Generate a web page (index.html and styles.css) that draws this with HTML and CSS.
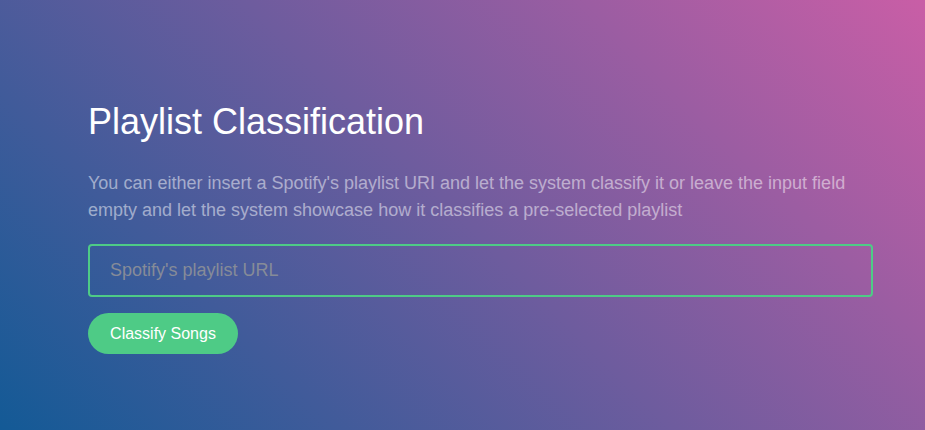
FILE: index.html
```html
<!DOCTYPE html>
<html lang="en">
<head>
<meta charset="utf-8">
<title>Playlist Classification</title>
<link rel="stylesheet" href="styles.css">
</head>
<body>
<main class="page">
  <section class="panel">
    <h1 class="title">Playlist Classification</h1>
    <p class="lead">You can either insert a Spotify's playlist URI and let the system classify it or leave the input field empty and let the system showcase how it classifies a pre-selected playlist</p>
    <form class="form">
      <input class="url-input" type="text" placeholder="Spotify's playlist URL" autofocus>
      <button class="btn" type="button">Classify Songs</button>
    </form>
  </section>
</main>
</body>
</html>
```
FILE: styles.css
```css
html, body {
  margin: 0;
  height: 100%;
}
body {
  font-family: "Liberation Sans", Arial, sans-serif;
  background: linear-gradient(45deg, #135a96 0%, #c95ea6 100%);
  color: #fff;
  overflow: hidden;
}
.page {
  height: 100%;
  padding: 100px 52px 0 88px;
  box-sizing: border-box;
}
.panel {
  display: flex;
  flex-direction: column;
  width: 785px;
}
.title {
  margin: 0;
  font-size: 36px;
  line-height: 43px;
  font-weight: 400;
}
.lead {
  margin: 27px 0 0;
  font-size: 18px;
  line-height: 27px;
  color: rgba(255, 255, 255, 0.5);
}
.form {
  display: flex;
  flex-direction: column;
  align-items: flex-start;
  gap: 16px;
  margin-top: 20px;
}
.url-input {
  width: 100%;
  height: 53px;
  box-sizing: border-box;
  border: 2px solid #4ecb86;
  border-radius: 4px;
  background: transparent;
  padding: 0 20px;
  font-family: inherit;
  font-size: 18px;
  color: #333;
  caret-color: #444;
  outline: none;
}
.url-input::placeholder {
  color: #868b98;
  opacity: 1;
}
.btn {
  height: 41px;
  width: 150px;
  border: none;
  border-radius: 21px;
  background: #4ecb86;
  color: #fff;
  font-family: inherit;
  font-size: 16px;
  padding: 0;
  cursor: pointer;
}
```
